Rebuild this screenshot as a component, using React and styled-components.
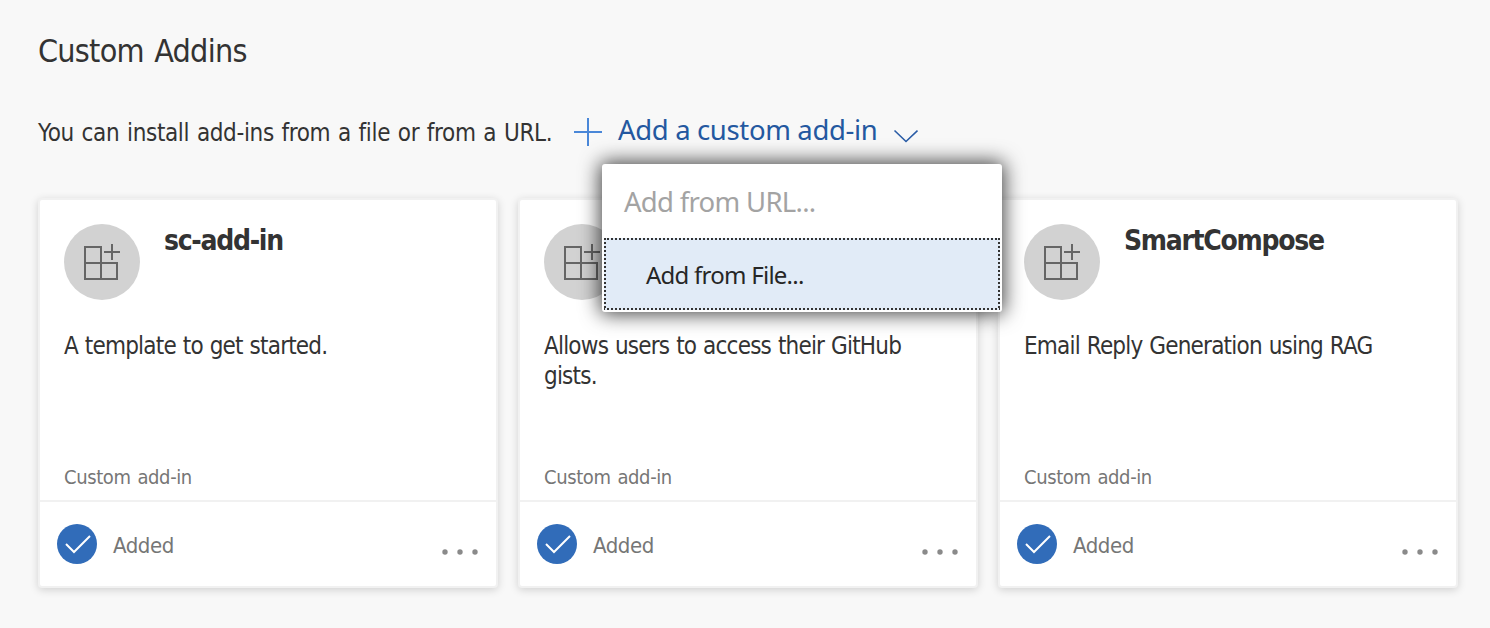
import React from "react";
import styled, { createGlobalStyle } from "styled-components";

const GlobalStyle = createGlobalStyle`
  * { box-sizing: border-box; }
  body {
    margin: 0;
    background: #f8f8f8;
    color: #333;
    font-family: "DejaVu Sans Condensed", "DejaVu Sans", sans-serif;
    font-stretch: condensed;
  }
`;

const Page = styled.main`
  width: 1490px;
  height: 628px;
  padding: 29px 32px 0 38px;
  overflow: hidden;
`;

const Heading = styled.h1`
  margin: 0;
  font-size: 32px;
  font-weight: 400;
  line-height: 44px;
  letter-spacing: -0.75px;
  word-spacing: 2px;
  white-space: nowrap;
`;

const InstallBar = styled.div`
  display: flex;
  align-items: flex-start;
  height: 40px;
  margin-top: 39px;
`;

const InstallText = styled.p`
  margin: 0;
  width: 536px;
  font-size: 24px;
  line-height: 42px;
  letter-spacing: -0.35px;
  word-spacing: 1.2px;
  white-space: nowrap;
`;

const AddMenu = styled.div`
  position: relative;
  font-family: "Noto Sans", "Open Sans", sans-serif;
  font-stretch: normal;
`;

const AddButton = styled.button`
  display: flex;
  align-items: flex-start;
  padding: 0;
  border: 0;
  background: none;
  color: #2458a0;
  font: inherit;
`;

const PlusIcon = styled.svg`
  flex: none;
  width: 28px;
  height: 28px;
  margin-top: 6px;
`;

const AddLabel = styled.span`
  flex: none;
  width: 290px;
  padding-left: 16px;
  margin-top: -2px;
  text-align: left;
  font-size: 27.5px;
  line-height: 40px;
  letter-spacing: -0.35px;
  white-space: nowrap;
`;

const ChevronIcon = styled.svg`
  flex: none;
  width: 26px;
  height: 16px;
  margin-top: 16px;
`;

const Menu = styled.div`
  position: absolute;
  z-index: 2;
  top: 52px;
  left: 28px;
  width: 400px;
  height: 148px;
  padding: 0 2px 2px;
  border-radius: 3px;
  background: #fff;
  box-shadow: 0 0 20px 2px rgba(0, 0, 0, 0.75);
`;

const MenuItemDisabled = styled.div`
  height: 74px;
  padding-left: 20px;
  color: #a3a3a3;
  font-size: 27.5px;
  line-height: 76px;
  letter-spacing: -0.7px;
`;

const dots = (angle) =>
  `repeating-linear-gradient(${angle}, #333 0 2px, transparent 2px 4px)`;

const MenuItemActive = styled.div`
  height: 72px;
  padding-left: 42px;
  color: #262626;
  background:
    ${dots("90deg")} -1px 0 / 400px 2px no-repeat,
    ${dots("90deg")} -1px 100% / 400px 2px no-repeat,
    ${dots("180deg")} 0 0 / 2px 100% no-repeat,
    ${dots("180deg")} 100% 0 / 2px 100% no-repeat,
    #e1ebf7;
  font-size: 24px;
  line-height: 74px;
  letter-spacing: -0.75px;
`;

const Cards = styled.div`
  display: flex;
  gap: 20px;
  margin-top: 46px;
`;

const Card = styled.article`
  display: flex;
  flex-direction: column;
  width: 460px;
  height: 390px;
  border: 2px solid #f1f1f1;
  border-radius: 4px;
  background: #fff;
  box-shadow: 0 2px 8px rgba(0, 0, 0, 0.16);
`;

const CardBody = styled.div`
  display: flex;
  flex-direction: column;
  height: 302px;
  padding: 24px 24px 9px;
  border-bottom: 2px solid #f1f1f1;
`;

const CardHeader = styled.div`
  display: flex;
  height: 76px;
  gap: 24px;
`;

const AddinBadge = styled.svg`
  width: 76px;
  height: 76px;
`;

const CardTitle = styled.h2`
  margin: -1px 0 0;
  font-size: 28px;
  font-weight: 700;
  line-height: 36px;
  letter-spacing: -1.3px;
`;

const Description = styled.p`
  max-width: 400px;
  margin: 31px 0 0;
  font-size: 24px;
  line-height: 30px;
  letter-spacing: -0.8px;
  word-spacing: 0.8px;
`;

const Kind = styled.span`
  margin-top: auto;
  color: #767676;
  font-size: 20px;
  line-height: 28px;
  letter-spacing: -0.4px;
  word-spacing: 1.6px;
`;

const CardFooter = styled.div`
  display: flex;
  align-items: center;
  flex: 1;
  padding: 0 16px 0 17px;
`;

const CheckBadge = styled.svg`
  width: 40px;
  height: 40px;
`;

const Status = styled.span`
  flex: 1;
  margin: 3px 0 0 16px;
  color: #767676;
  font-size: 22px;
  line-height: 30px;
  letter-spacing: -0.45px;
`;

const MoreIcon = styled.svg`
  width: 40px;
  height: 8px;
  margin-top: 16px;
`;

const addins = [
  { name: "sc-add-in", description: "A template to get started." },
  { name: "", description: "Allows users to access their GitHub gists." },
  { name: "SmartCompose", description: "Email Reply Generation using RAG" },
];

function AddinCard({ name, description }) {
  return (
    <Card>
      <CardBody>
        <CardHeader>
          <AddinBadge viewBox="0 0 76 76" fill="none">
            <circle cx="38" cy="38" r="38" fill="#d2d2d2" />
            <path
              d="M21 23h16v32H21zM21 39h32v16H37M48 20v16M40 28h16"
              stroke="#666"
              strokeWidth="2"
            />
          </AddinBadge>
          <CardTitle>{name}</CardTitle>
        </CardHeader>
        <Description>{description}</Description>
        <Kind>Custom add-in</Kind>
      </CardBody>
      <CardFooter>
        <CheckBadge viewBox="0 0 40 40" fill="none">
          <circle cx="20" cy="20" r="20" fill="#316cb9" />
          <path d="M9 20l8 8 16-16" stroke="#fff" strokeWidth="2" />
        </CheckBadge>
        <Status>Added</Status>
        <MoreIcon viewBox="0 0 40 8" fill="#8a8a8a">
          <circle cx="5" cy="4" r="2.7" />
          <circle cx="20" cy="4" r="2.7" />
          <circle cx="35" cy="4" r="2.7" />
        </MoreIcon>
      </CardFooter>
    </Card>
  );
}

export default function App() {
  return (
    <>
      <GlobalStyle />
      <Page>
        <Heading>Custom Addins</Heading>
        <InstallBar>
          <InstallText>You can install add-ins from a file or from a URL.</InstallText>
          <AddMenu>
            <AddButton>
              <PlusIcon viewBox="0 0 28 28" fill="none">
                <path d="M14 0v28M0 14h28" stroke="#4a87d8" strokeWidth="2" />
              </PlusIcon>
              <AddLabel>Add a custom add-in</AddLabel>
              <ChevronIcon viewBox="0 0 26 16" fill="none">
                <path d="M2.5 2.5L14 13.5 25.5 2.5" stroke="#2a5ca6" strokeWidth="1.6" />
              </ChevronIcon>
            </AddButton>
            <Menu>
              <MenuItemDisabled>Add from URL...</MenuItemDisabled>
              <MenuItemActive>Add from File...</MenuItemActive>
            </Menu>
          </AddMenu>
        </InstallBar>
        <Cards>
          {addins.map((addin) => (
            <AddinCard key={addin.description} {...addin} />
          ))}
        </Cards>
      </Page>
    </>
  );
}
